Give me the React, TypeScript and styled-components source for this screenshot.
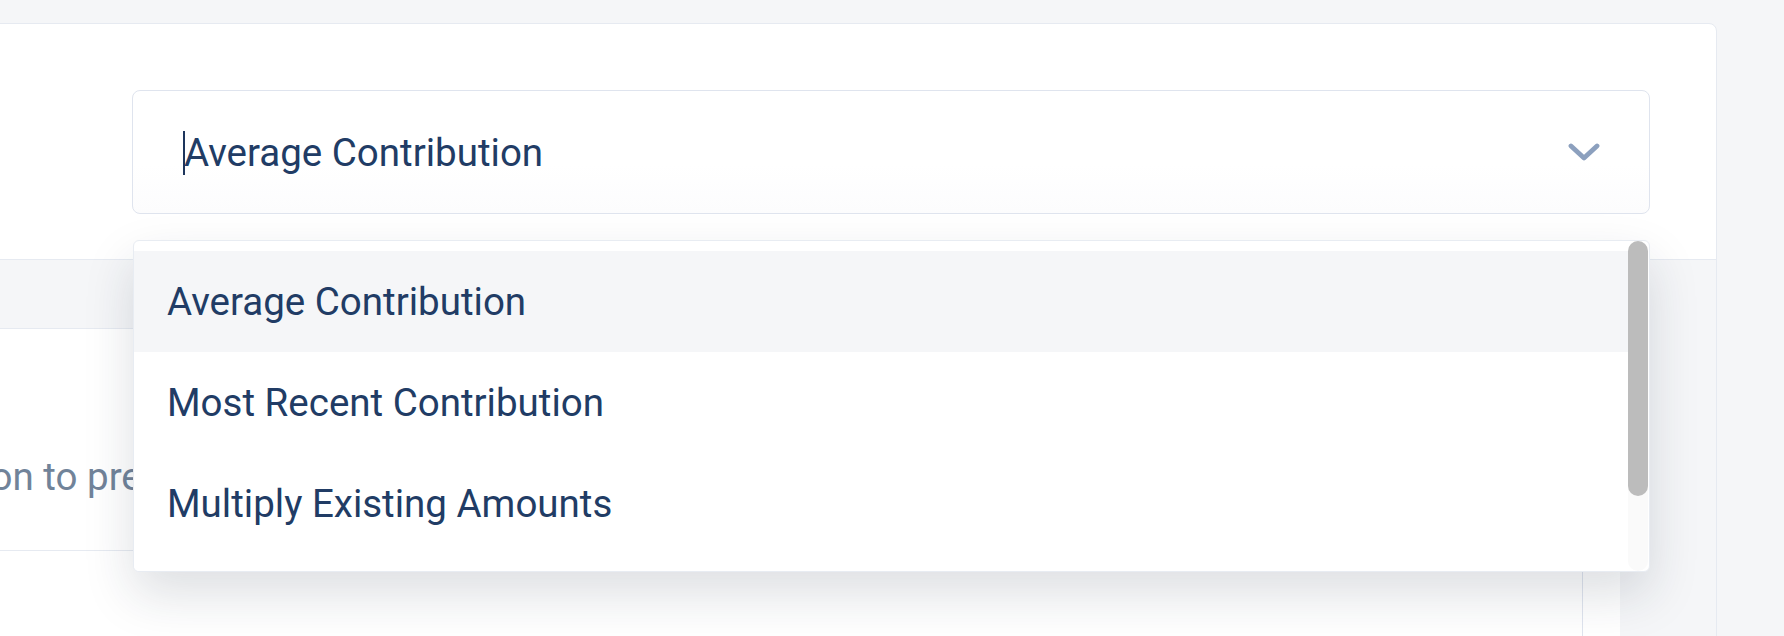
import styled, { createGlobalStyle } from 'styled-components';

const options = [
  'Average Contribution',
  'Most Recent Contribution',
  'Multiply Existing Amounts',
  'Custom Amount',
];

function ChevronDown() {
  return (
    <svg width="32" height="18" viewBox="0 0 32 18" fill="none">
      <path
        d="M3 3 L16 15 L29 3"
        stroke="#8ca0be"
        strokeWidth="4.8"
        strokeLinecap="round"
        strokeLinejoin="round"
      />
    </svg>
  );
}

function App() {
  return (
    <>
      <GlobalStyle />
      <StyledPage>
        <StyledCard>
          <StyledHeader>
            <StyledSelectWrap>
              <StyledSelect>
                <StyledValue>
                  <StyledCaret />
                  Average Contribution
                </StyledValue>
                <ChevronDown />
              </StyledSelect>
              <StyledMenu>
                <StyledOptionList>
                  {options.map((option, index) => (
                    <StyledOption key={option} active={index === 0}>
                      {option}
                    </StyledOption>
                  ))}
                </StyledOptionList>
                <StyledScrollTrack>
                  <StyledScrollThumb />
                </StyledScrollTrack>
              </StyledMenu>
            </StyledSelectWrap>
          </StyledHeader>
          <StyledBody>
            <StyledPanel>
              <StyledPanelRow>
                <StyledHint>
                  Choose a contribution calculation to prefill the new amounts
                </StyledHint>
              </StyledPanelRow>
              <StyledPanelRow>
                <StyledCell />
              </StyledPanelRow>
            </StyledPanel>
          </StyledBody>
        </StyledCard>
      </StyledPage>
    </>
  );
}

export default App;

const GlobalStyle = createGlobalStyle`
  html, body {
    margin: 0;
    padding: 0;
    background-color: #f5f6f8;
    font-family: Roboto, "Liberation Sans", sans-serif;
    overflow: hidden;
  }
`;

const StyledPage = styled.div`
  width: 1784px;
  height: 636px;
  overflow: hidden;
  padding-top: 23px;
  box-sizing: border-box;
`;

const StyledCard = styled.div`
  margin-left: -40px;
  width: 1757px;
  height: 700px;
  box-sizing: border-box;
  background-color: #ffffff;
  border: 1px solid #e6eaf1;
  border-radius: 8px;
  display: flex;
  flex-direction: column;
`;

const StyledHeader = styled.div`
  padding: 66px 66px 45px 171px;
  border-bottom: 1px solid #e6eaf1;
`;

const StyledSelectWrap = styled.div`
  position: relative;
`;

const StyledSelect = styled.div`
  height: 124px;
  box-sizing: border-box;
  border: 1px solid #dfe4ee;
  border-radius: 8px;
  background: linear-gradient(#ffffff 60%, #fcfcfd);
  display: flex;
  align-items: center;
  justify-content: space-between;
  padding: 0 49px 0 50px;
`;

const StyledValue = styled.div`
  display: flex;
  align-items: center;
  font-size: 38.5px;
  color: #213c65;
`;

const StyledCaret = styled.span`
  display: inline-block;
  width: 2px;
  height: 44px;
  margin: 2px -1px 0 0;
  background-color: #1d355c;
`;

const StyledMenu = styled.div`
  position: absolute;
  top: calc(100% + 26px);
  left: 1px;
  right: 0;
  height: 332px;
  box-sizing: border-box;
  background-color: #ffffff;
  border: 1px solid #e8ecf2;
  border-radius: 6px;
  box-shadow: 0 22px 50px rgba(30, 40, 60, 0.15);
  display: flex;
  overflow: hidden;
  z-index: 2;
`;

const StyledOptionList = styled.div`
  flex: 1;
  padding-top: 10px;
`;

const StyledOption = styled.div<{ active?: boolean }>`
  height: 101px;
  display: flex;
  align-items: center;
  padding-left: 33px;
  font-size: 38.5px;
  color: #213c65;
  background-color: ${(props) => (props.active ? '#f5f6f8' : '#ffffff')};
`;

const StyledScrollTrack = styled.div`
  width: 20px;
  margin-right: 1px;
  background-color: #fafafa;
  border-radius: 10px;
`;

const StyledScrollThumb = styled.div`
  height: 255px;
  background-color: #bcbcbc;
  border-radius: 10px;
`;

const StyledBody = styled.div`
  flex: 1;
  background-color: #f5f6f8;
  padding: 68px 96px 0 0;
`;

const StyledPanel = styled.div`
  height: 100%;
  background-color: #ffffff;
  border-top: 1px solid #e6eaf1;
  display: flex;
  flex-direction: column;
`;

const StyledPanelRow = styled.div`
  display: flex;
  border-bottom: 1px solid #e6eaf1;

  &:first-child {
    height: 222px;
    box-sizing: border-box;
    padding-top: 125px;
  }

  &:last-child {
    flex: 1;
    border-bottom: 0;
  }
`;

const StyledHint = styled.p`
  margin: 0 0 0 -501px;
  font-size: 38.5px;
  line-height: 46px;
  color: #718399;
  white-space: nowrap;
`;

const StyledCell = styled.div`
  width: 1621px;
  border-right: 1px solid #dfe4ee;
`;
